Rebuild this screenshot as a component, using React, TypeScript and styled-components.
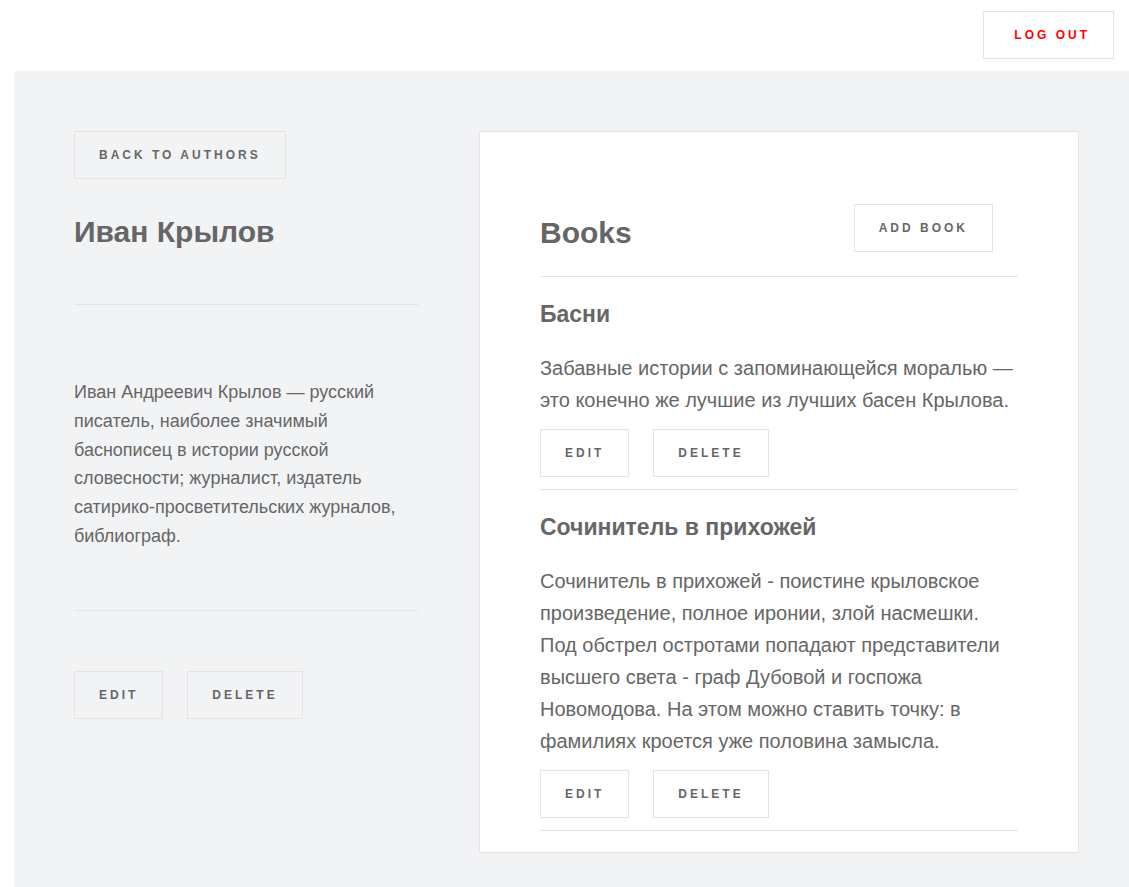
import React from "react";
import styled, { createGlobalStyle } from "styled-components";

const GlobalStyle = createGlobalStyle`
  * { box-sizing: border-box; }
  html, body { margin: 0; padding: 0; background: #ffffff; }
  body {
    font-family: "Liberation Sans", Arial, Helvetica, sans-serif;
    color: #666666;
  }
`;

const Header = styled.header`
  display: flex;
  justify-content: flex-end;
  align-items: center;
  height: 71px;
  padding: 0 15px 1px 0;
  background: #ffffff;
`;

const Button = styled.button<{ $danger?: boolean }>`
  display: inline-flex;
  align-items: center;
  justify-content: center;
  height: 48px;
  padding: ${(p) => (p.$danger ? "0 23px 0 30px" : "0 24px")};
  background: ${(p) => (p.$danger ? "#ffffff" : "transparent")};
  border: 1px solid #e3e3e3;
  border-radius: 0;
  font-family: "Liberation Sans", Arial, Helvetica, sans-serif;
  font-size: 12px;
  font-weight: 700;
  letter-spacing: 3px;
  text-transform: uppercase;
  color: ${(p) => (p.$danger ? "#ff0000" : "#666666")};
  cursor: pointer;
`;

const Main = styled.main`
  display: flex;
  align-items: flex-start;
  gap: 61px;
  margin-left: 14px;
  min-height: 816px;
  padding: 60px 50px 36px 60px;
  background: #f2f3f5;
`;

const AuthorColumn = styled.section`
  display: flex;
  flex-direction: column;
  align-items: flex-start;
  width: 344px;
  flex-shrink: 0;
`;

const AuthorName = styled.h1`
  margin: 35px 0 0;
  font-size: 30px;
  line-height: 36px;
  font-weight: 700;
  color: #666666;
`;

const Divider = styled.hr<{ $top: number; $bottom: number }>`
  width: 100%;
  margin: ${(p) => p.$top}px 0 ${(p) => p.$bottom}px;
  border: 0;
  border-top: 1px solid #e2e3e5;
`;

const Bio = styled.p`
  margin: 0;
  font-size: 18px;
  line-height: 28.8px;
  color: #666666;
`;

const ButtonRow = styled.div`
  display: flex;
  gap: 24px;
`;

const Card = styled.section`
  width: 600px;
  flex-shrink: 0;
  background: #ffffff;
  border: 1px solid #e3e3e3;
  padding: 0 60px 21px;
`;

const CardHeader = styled.div`
  display: flex;
  align-items: center;
  justify-content: space-between;
  padding: 72px 25px 24px 0;
  border-bottom: 1px solid #e3e3e3;
`;

const CardTitle = styled.h2`
  margin: 0;
  padding-top: 10px;
  font-size: 30px;
  line-height: 36px;
  font-weight: 700;
  color: #666666;
`;

const BookItem = styled.article`
  padding: 23px 0 12px;
  border-bottom: 1px solid #e3e3e3;
`;

const BookTitle = styled.h3`
  margin: 0;
  font-size: 23px;
  line-height: 28px;
  font-weight: 700;
  color: #666666;
`;

const BookText = styled.p`
  margin: 24px 0 13px;
  font-size: 20px;
  line-height: 32px;
  color: #666666;
`;

const books = [
  {
    title: "Басни",
    text: "Забавные истории с запоминающейся моралью — это конечно же лучшие из лучших басен Крылова.",
  },
  {
    title: "Сочинитель в прихожей",
    text: "Сочинитель в прихожей - поистине крыловское произведение, полное иронии, злой насмешки. Под обстрел остротами попадают представители высшего света - граф Дубовой и госпожа Новомодова. На этом можно ставить точку: в фамилиях кроется уже половина замысла.",
  },
];

export default function App() {
  return (
    <>
      <GlobalStyle />
      <Header>
        <Button $danger>Log out</Button>
      </Header>
      <Main>
        <AuthorColumn>
          <Button>Back to authors</Button>
          <AuthorName>Иван Крылов</AuthorName>
          <Divider $top={54} $bottom={73} />
          <Bio>
            Иван Андреевич Крылов — русский писатель, наиболее значимый баснописец в истории русской
            словесности; журналист, издатель сатирико-просветительских журналов, библиограф.
          </Bio>
          <Divider $top={59} $bottom={60} />
          <ButtonRow>
            <Button>Edit</Button>
            <Button>Delete</Button>
          </ButtonRow>
        </AuthorColumn>
        <Card>
          <CardHeader>
            <CardTitle>Books</CardTitle>
            <Button>Add book</Button>
          </CardHeader>
          {books.map((b) => (
            <BookItem key={b.title}>
              <BookTitle>{b.title}</BookTitle>
              <BookText>{b.text}</BookText>
              <ButtonRow>
                <Button>Edit</Button>
                <Button>Delete</Button>
              </ButtonRow>
            </BookItem>
          ))}
        </Card>
      </Main>
    </>
  );
}
